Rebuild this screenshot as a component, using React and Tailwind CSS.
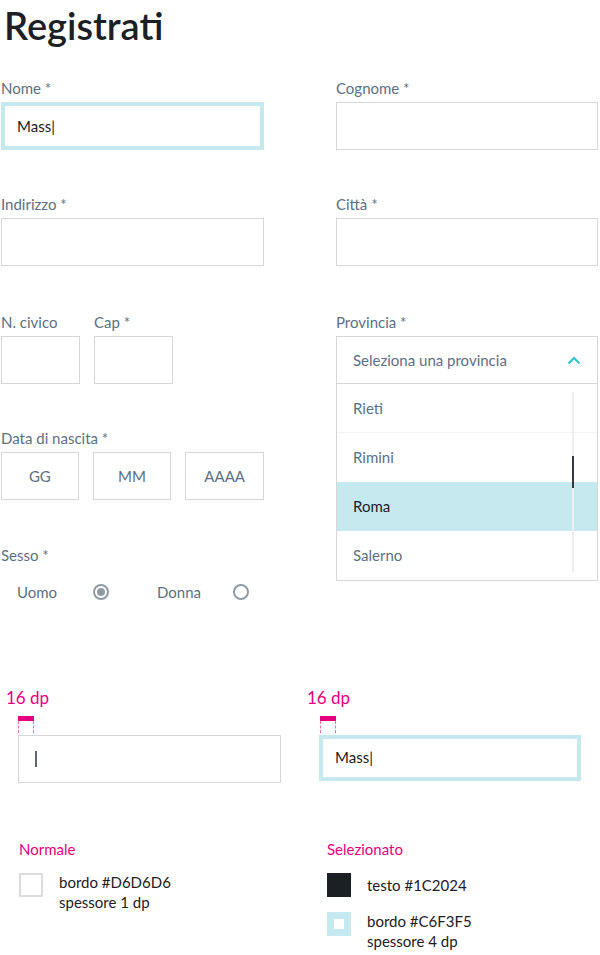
import { useState } from "react";

const Field = ({ label, children }) => (
  <div className="flex flex-col">
    <label className="text-[15px] leading-[20px] text-[#5c6f82] mb-1">{label}</label>
    {children}
  </div>
);

const Box = ({ className = "", children }) => (
  <div className={`h-12 border border-[#d6d6d6] bg-white flex items-center ${className}`}>{children}</div>
);

const Radio = ({ checked }) => (
  <span className="w-4 h-4 rounded-full border-2 border-[#8f9ba6] flex items-center justify-center">
    {checked && <span className="w-2 h-2 rounded-full bg-[#8f9ba6]" />}
  </span>
);

const Spacer16 = () => (
  <div className="flex flex-col w-4 ml-px">
    <div className="h-[5px] bg-[#e6007e]" />
    <div className="h-3 border-x border-dashed border-[#ee6fb4]" />
  </div>
);

const App = () => {
  const [provincia] = useState("Roma");
  const province = ["Rieti", "Rimini", "Roma", "Salerno"];

  return (
    <div className="w-[600px] min-h-[955px] bg-white text-[#1c2024]" style={{ fontFamily: "Lato, 'Noto Sans', sans-serif" }}>
      <h1 className="pl-[4px] pt-[2px] h-[78px] text-[38px] leading-[46px] font-semibold text-[#1c2024]">Registrati</h1>

      {/* Form */}
      <div className="flex pl-px">
        {/* Left column */}
        <div className="w-[263px] flex flex-col">
          <Field label="Nome *">
            <div className="h-12 border-4 border-[#c6e9ef] flex items-center pl-3 text-[15px]">Mass|</div>
          </Field>
          <div className="mt-[44px]">
            <Field label="Indirizzo *">
              <Box />
            </Field>
          </div>
          <div className="mt-[46px] flex gap-[14px]">
            <div className="w-[79px]">
              <Field label="N. civico">
                <Box />
              </Field>
            </div>
            <div className="w-[79px]">
              <Field label="Cap *">
                <Box />
              </Field>
            </div>
          </div>
          <div className="mt-[44px]">
            <Field label="Data di nascita *">
              <div className="flex gap-[14px]">
                <Box className="w-[78px] justify-center text-[15px] text-[#5c6f82]">GG</Box>
                <Box className="w-[79px] justify-center text-[15px] text-[#5c6f82]">MM</Box>
                <Box className="w-[79px] justify-center text-[15px] text-[#5c6f82]">AAAA</Box>
              </div>
            </Field>
          </div>
          <div className="mt-[45px]">
            <div className="text-[15px] leading-[20px] text-[#5c6f82]">Sesso *</div>
            <div className="flex items-center mt-[16px] pl-4 text-[15px] text-[#5c6f82]">
              <span className="w-[76px]">Uomo</span>
              <Radio checked />
              <span className="ml-[48px] w-[76px]">Donna</span>
              <Radio />
            </div>
          </div>
        </div>

        {/* Right column */}
        <div className="w-[262px] ml-[72px] flex flex-col">
          <Field label="Cognome *">
            <Box />
          </Field>
          <div className="mt-[44px]">
            <Field label="Città *">
              <Box />
            </Field>
          </div>
          <div className="mt-[46px]">
            <Field label="Provincia *">
              <Box className="justify-between px-4 text-[15px] text-[#5c6f82]">
                <span>Seleziona una provincia</span>
                <svg width="14" height="9" viewBox="0 0 14 9" fill="none" stroke="#2ec4cf" strokeWidth="2">
                  <path d="M1.5 7.5 7 2l5.5 5.5" />
                </svg>
              </Box>
              <div className="relative border-x border-b border-[#d6d6d6]">
                {province.map((p, i) => (
                  <div
                    key={p}
                    className={`h-[49px] flex items-center px-4 text-[15px] ${
                      p === provincia ? "bg-[#c6e9f0] text-[#1c2024]" : "text-[#5c6f82]"
                    } ${i === 0 ? "border-b border-[#f3f4f5]" : ""}`}
                  >
                    {p}
                  </div>
                ))}
                <div className="absolute right-[23px] top-2 bottom-2 w-[2px] bg-[#eeeeee]">
                  <div className="absolute left-0 top-[64px] h-[32px] w-[2px] bg-[#333a40]" />
                </div>
              </div>
            </Field>
          </div>
        </div>
      </div>

      {/* Specs */}
      <div className="flex mt-[83px]">
        <div className="w-[301px] pl-[6px]">
          <div className="text-[17px] leading-[22px] text-[#e6007e]">16 dp</div>
          <div className="mt-[7px] pl-[11px]">
            <Spacer16 />
            <div className="mt-[2px] ml-px w-[263px] h-12 border border-[#d6d6d6] flex items-center pl-4">
              <span className="w-[1.5px] h-4 bg-[#5f6870]" />
            </div>
          </div>
        </div>
        <div className="w-[299px] pl-[6px]">
          <div className="text-[17px] leading-[22px] text-[#e6007e]">16 dp</div>
          <div className="mt-[7px] pl-[12px]">
            <Spacer16 />
            <div className="mt-[2px] w-[262px] h-[46px] border-4 border-[#c6e9ef] flex items-center pl-3 text-[15px] text-[#1c2024]">Mass|</div>
          </div>
        </div>
      </div>

      <div className="flex mt-[56px]">
        <div className="w-[308px] pl-[19px]">
          <div className="text-[15px] leading-[20px] text-[#e6007e]">Normale</div>
          <div className="flex mt-[14px]">
            <div className="w-6 h-6 border-2 border-[#dcdcdc]" />
            <div className="ml-4 text-[15px] leading-[20px] -mt-px">
              <div>bordo #D6D6D6</div>
              <div>spessore 1 dp</div>
            </div>
          </div>
        </div>
        <div className="pl-[19px]">
          <div className="text-[15px] leading-[20px] text-[#e6007e]">Selezionato</div>
          <div className="flex items-center mt-[14px]">
            <div className="w-6 h-6 bg-[#1c2024]" />
            <div className="ml-4 text-[15px] leading-[20px]">testo #1C2024</div>
          </div>
          <div className="flex mt-[15px]">
            <div className="w-6 h-6 border-[7px] border-[#c6e9ef] bg-white" />
            <div className="ml-4 text-[15px] leading-[20px] -mt-px">
              <div>bordo #C6F3F5</div>
              <div>spessore 4 dp</div>
            </div>
          </div>
        </div>
      </div>
    </div>
  );
};

export default App;
